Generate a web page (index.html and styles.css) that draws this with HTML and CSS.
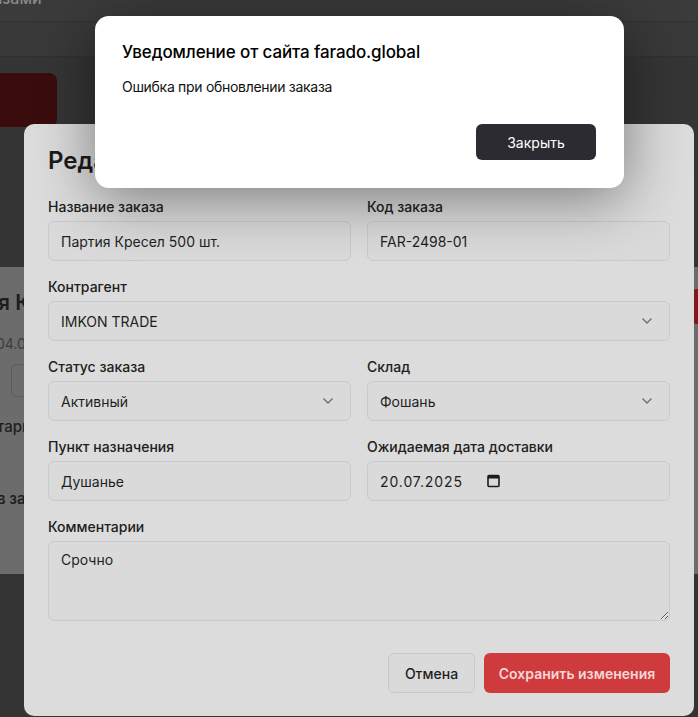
FILE: index.html
```html
<!DOCTYPE html>
<html lang="ru">
<head>
<meta charset="utf-8">
<title>Редактирование заказа</title>
<link rel="stylesheet" href="styles.css">
</head>
<body>
<div class="page">
  <div class="topbar"><span class="crumb">Управление заказами</span></div>
  <div class="band"></div>
  <div class="area"><div class="redbtn"></div></div>
  <div class="card">
    <div class="card-title">я Кресел 500 шт.</div>
    <div class="card-date">04.07.2025</div>
    <div class="card-box"></div>
    <div class="card-label">тарии</div>
    <div class="card-sub">в заказе</div>
    <div class="card-red"></div>
  </div>
  <div class="bottom"></div>
</div>

<div class="modal">
  <h2 class="modal-title">Редактирование заказа</h2>
  <div class="grid">
    <div class="field">
      <label class="label">Название заказа</label>
      <input class="control" type="text" value="Партия Кресел 500 шт.">
    </div>
    <div class="field">
      <label class="label">Код заказа</label>
      <input class="control" type="text" value="FAR-2498-01">
    </div>
    <div class="field full">
      <label class="label">Контрагент</label>
      <div class="control select"><span>IMKON TRADE</span>
        <svg class="chev" width="12" height="8" viewBox="0 0 12 8"><polyline points="1.5,1.5 6,6 10.5,1.5" fill="none" stroke="#6f6f6f" stroke-width="1.4"/></svg>
      </div>
    </div>
    <div class="field">
      <label class="label">Статус заказа</label>
      <div class="control select"><span>Активный</span>
        <svg class="chev" width="12" height="8" viewBox="0 0 12 8"><polyline points="1.5,1.5 6,6 10.5,1.5" fill="none" stroke="#6f6f6f" stroke-width="1.4"/></svg>
      </div>
    </div>
    <div class="field">
      <label class="label">Склад</label>
      <div class="control select"><span>Фошань</span>
        <svg class="chev" width="12" height="8" viewBox="0 0 12 8"><polyline points="1.5,1.5 6,6 10.5,1.5" fill="none" stroke="#6f6f6f" stroke-width="1.4"/></svg>
      </div>
    </div>
    <div class="field">
      <label class="label">Пункт назначения</label>
      <input class="control" type="text" value="Душанье">
    </div>
    <div class="field">
      <label class="label">Ожидаемая дата доставки</label>
      <div class="control date"><span class="date-text">20.07.2025</span>
        <svg class="cal" width="13" height="14" viewBox="0 0 13 14"><rect x="1" y="1.5" width="11" height="11" rx="1" fill="none" stroke="#1c1c1c" stroke-width="1.6"/><rect x="1" y="1.5" width="11" height="3" fill="#1c1c1c"/></svg>
      </div>
    </div>
    <div class="field full">
      <label class="label">Комментарии</label>
      <textarea class="control area-input">Срочно</textarea>
    </div>
  </div>
  <div class="actions">
    <button class="btn btn-cancel">Отмена</button>
    <button class="btn btn-save">Сохранить изменения</button>
  </div>
</div>

<div class="alert">
  <div class="alert-title">Уведомление от сайта farado.global</div>
  <div class="alert-msg">Ошибка при обновлении заказа</div>
  <div class="alert-actions"><button class="alert-btn">Закрыть</button></div>
</div>
</body>
</html>
```

FILE: styles.css
```css
* { box-sizing: border-box; }
html, body { margin: 0; padding: 0; }
body {
  width: 698px;
  height: 717px;
  overflow: hidden;
  background: #343434;
  font-family: Inter, "Noto Sans", sans-serif;
  position: relative;
}
.page { display: flex; flex-direction: column; }
.topbar {
  height: 22px;
  background: #3b3b3b;
  overflow: hidden;
  border-bottom: 1px solid #323232;
}
.crumb {
  display: block;
  white-space: nowrap;
  margin-top: -12px;
  margin-left: -132px;
  font-size: 16px;
  line-height: 20px;
  font-weight: 500;
  color: #8a8a8a;
}
.band { height: 35px; background: #393939; border-bottom: 1px solid #313131; }
.area { height: 210px; background: #353535; padding-top: 16px; }
.redbtn {
  width: 57px;
  height: 54px;
  background: #3a0c0e;
  border-radius: 0 8px 8px 0;
}
.card {
  height: 307px;
  background: #6c6c6c;
  position: relative;
  overflow: hidden;
  padding-top: 22px;
  white-space: nowrap;
}
.card-title { margin-left: -2px; font-size: 21px; line-height: 28px; font-weight: 600; color: #1d1d1d; }
.card-date { margin-left: -4px; margin-top: 17px; font-size: 14px; line-height: 20px; color: #3d3d3d; }
.card-box {
  margin-left: 11px;
  margin-top: 10px;
  width: 60px;
  height: 33px;
  border: 1px solid #5b5b5b;
  border-radius: 6px;
}
.card-label { margin-left: -3px; margin-top: 20px; font-size: 15px; line-height: 20px; font-weight: 500; color: #1f1f1f; }
.card-sub { margin-left: -3px; margin-top: 52px; font-size: 15px; line-height: 20px; font-weight: 600; color: #1f1f1f; }
.card-red {
  position: absolute;
  right: -6px;
  top: 22px;
  width: 14px;
  height: 35px;
  border-radius: 8px;
  background: #7e1a1c;
}
.bottom { flex: 1; background: #353535; }

/* edit modal */
.modal {
  position: absolute;
  left: 24px;
  top: 124px;
  width: 670px;
  height: 592px;
  background: #dcdcdc;
  border-radius: 10px;
  padding: 21px 24px 24px;
  display: flex;
  flex-direction: column;
}
.modal-title {
  margin: 0 0 20px;
  font-size: 24px;
  line-height: 32px;
  font-weight: 600;
  color: #1b1b1b;
  white-space: nowrap;
}
.grid {
  display: grid;
  grid-template-columns: 1fr 1fr;
  column-gap: 16px;
  row-gap: 16px;
}
.full { grid-column: 1 / -1; }
.field { display: flex; flex-direction: column; gap: 4px; }
.label {
  font-size: 14px;
  line-height: 20px;
  font-weight: 500;
  color: #202020;
}
.control {
  height: 40px;
  width: 100%;
  border: 1px solid #c7cad1;
  border-radius: 6px;
  background: #dadada;
  padding: 0 12px;
  font-family: Inter, "Noto Sans", sans-serif;
  font-size: 14px;
  color: #1f1f1f;
  outline: none;
}
.select, .date { display: flex; align-items: center; }
.select span { flex: 1; }
.chev { margin-right: 4px; }
.date-text { letter-spacing: 0.9px; }
.cal { margin-left: 24px; }
.area-input {
  height: 80px;
  padding: 8px 12px;
  line-height: 20px;
  resize: vertical;
  display: block;
}
.actions {
  margin-top: 32px;
  display: flex;
  justify-content: flex-end;
  gap: 9px;
}
.btn {
  height: 40px;
  border-radius: 6px;
  font-family: Inter, "Noto Sans", sans-serif;
  font-size: 14px;
  font-weight: 500;
  padding: 0 16px;
}
.btn-cancel { background: #dadada; border: 1px solid #c5c8cf; color: #1f1f1f; width: 87px; padding: 0; }
.btn-save { background: #cf3a3c; border: none; color: #f3d6d6; font-weight: 600; width: 186px; padding: 0; }

/* browser alert */
.alert {
  position: absolute;
  left: 95px;
  top: 16px;
  width: 529px;
  height: 172px;
  background: #ffffff;
  border-radius: 14px;
  padding: 25px 28px 28px 27px;
  box-shadow: 0 10px 60px rgba(0, 0, 0, 0.45);
  display: flex;
  flex-direction: column;
}
.alert-title {
  font-size: 17px;
  line-height: 22px;
  font-weight: 500;
  letter-spacing: -0.12px;
  color: #000;
  white-space: nowrap;
}
.alert-msg {
  margin-top: 14px;
  font-size: 14px;
  line-height: 20px;
  letter-spacing: -0.3px;
  color: #111;
}
.alert-actions { margin-top: auto; display: flex; justify-content: flex-end; }
.alert-btn {
  width: 120px;
  height: 36px;
  border: none;
  border-radius: 6px;
  background: #2c2b31;
  color: #fff;
  font-family: Inter, "Noto Sans", sans-serif;
  font-size: 14px;
}
```
